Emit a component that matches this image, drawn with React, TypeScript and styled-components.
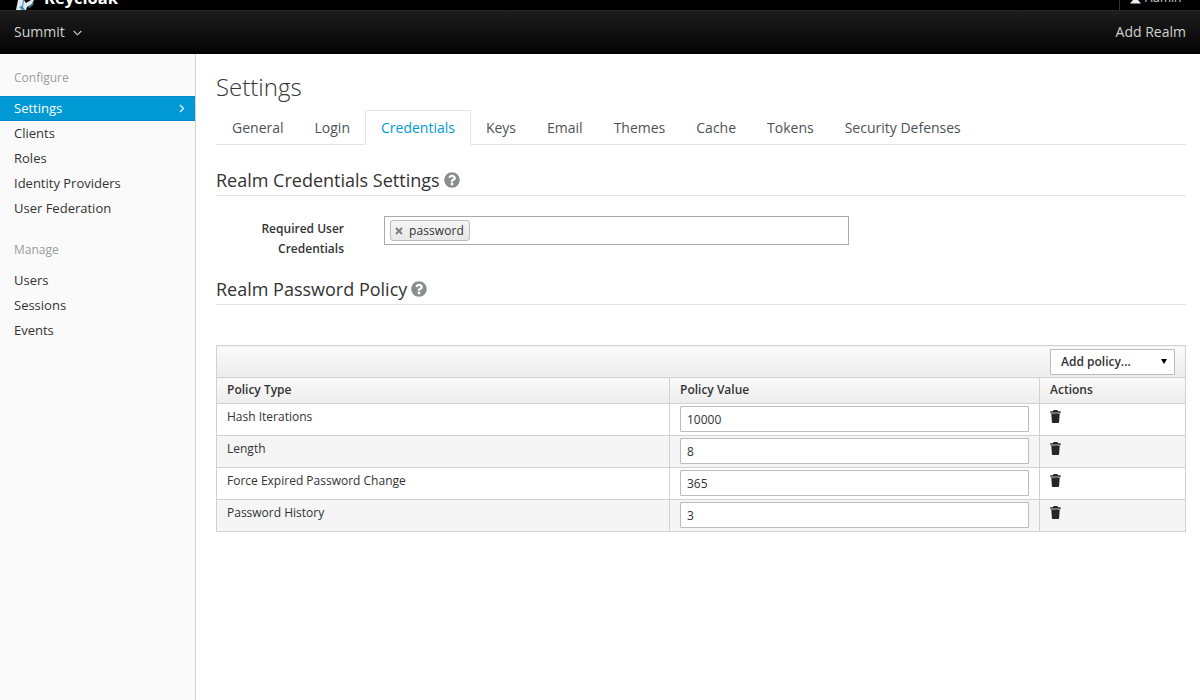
import React from 'react'
import styled, { createGlobalStyle } from 'styled-components'
import { FaQuestionCircle } from 'react-icons/fa'

const GlobalStyle = createGlobalStyle`
  html, body {
    margin: 0;
    padding: 0;
    height: 100%;
    background: #fff;
    overflow: hidden;
  }
  body {
    font-family: "Open Sans", "Liberation Sans", sans-serif;
    font-size: 12px;
    color: #333;
  }
  * {
    box-sizing: border-box;
  }
`

const Page = styled.div`
  width: 1200px;
  height: 700px;
  display: flex;
  flex-direction: column;
  overflow: hidden;
`

const UtilityBar = styled.div`
  height: 10px;
  flex: none;
  background: #000;
  display: flex;
  justify-content: space-between;
  overflow: hidden;
`

const Brand = styled.div`
  display: flex;
  align-items: flex-end;
  height: 10px;
  margin-left: 15px;
  gap: 8px;
`

const BrandName = styled.span`
  font-size: 16.5px;
  line-height: 17px;
  font-weight: 700;
  color: #fff;
  margin-bottom: 4px;
`

const UserMenu = styled.div`
  width: 81px;
  border-left: 1px solid #333;
  display: flex;
  align-items: flex-end;
  padding-left: 10px;
  gap: 4px;
  color: #d1d1d1;
  font-size: 12px;
  line-height: 12px;
`

const UserName = styled.span`
  margin-bottom: 6px;
`

const RealmBar = styled.div`
  height: 44px;
  flex: none;
  background: linear-gradient(to bottom, #1d1d1d, #030303);
  border-top: 1px solid #262626;
  display: flex;
  align-items: center;
  justify-content: space-between;
  padding: 0 14px 2px;
  color: #d1d1d1;
  font-size: 14px;
`

const RealmName = styled.div`
  display: flex;
  align-items: center;
  gap: 8px;
`

const Chevron = styled.svg`
  margin-top: 3px;
`

const Body = styled.div`
  flex: 1;
  display: flex;
  min-height: 0;
`

const Sidebar = styled.nav`
  width: 196px;
  flex: none;
  background: #fafafa;
  border-right: 1px solid #d1d1d1;
  padding-top: 14px;
`

const NavHeading = styled.div`
  height: 20px;
  padding-left: 14px;
  line-height: 20px;
  font-size: 12px;
  color: #9c9c9c;
  margin: 0 0 8px;

  & ~ & {
    margin-top: 19px;
    margin-bottom: 8px;
  }
`

const NavItem = styled.div<{ $active?: boolean }>`
  height: 25px;
  display: flex;
  align-items: center;
  justify-content: space-between;
  padding: 0 10px 1px 14px;
  font-size: 13px;
  color: ${p => (p.$active ? '#fff' : '#333')};
  background: ${p => (p.$active ? '#0099d3' : 'transparent')};
  border-top: ${p => (p.$active ? '1px solid #0085cf' : 'none')};
  border-bottom: ${p => (p.$active ? '1px solid #0085cf' : 'none')};
`

const Content = styled.main`
  flex: 1;
  padding: 0 14px 0 20px;
  min-width: 0;
`

const Title = styled.h1`
  margin: 0;
  height: 56px;
  padding-top: 15px;
  font-size: 24px;
  line-height: 36px;
  font-weight: 300;
  color: #333;
`

const Tabs = styled.div`
  display: flex;
  height: 35px;
  border-bottom: 1px solid #e5e5e5;
`

const Tab = styled.div<{ $active?: boolean }>`
  height: 35px;
  margin-right: -1px;
  padding: 0 15px;
  font-size: 14px;
  line-height: 33px;
  color: ${p => (p.$active ? '#0099d3' : '#4d5258')};
  background: ${p => (p.$active ? '#fff' : 'transparent')};
  border: 1px solid ${p => (p.$active ? '#e5e5e5' : 'transparent')};
  border-bottom-color: ${p => (p.$active ? '#fff' : 'transparent')};
`

const SectionTitle = styled.h2<{ $top: number }>`
  margin: ${p => p.$top}px 0 0;
  height: 36px;
  padding-top: 4px;
  display: flex;
  align-items: center;
  gap: 4px;
  font-size: 18px;
  line-height: 24px;
  font-weight: 400;
  color: #333;
  border-bottom: 1px solid #e5e5e5;
`

const HelpIcon = styled(FaQuestionCircle)`
  width: 16px;
  height: 16px;
  margin-top: 1px;
  flex: none;
  color: #8b8d8f;
`

const FormRow = styled.div`
  display: flex;
  margin-top: 20px;
  align-items: flex-start;
`

const FormLabel = styled.label`
  width: 128px;
  text-align: right;
  font-weight: 600;
  font-size: 12px;
  line-height: 20px;
  padding-top: 3px;
  color: #333;
  flex: none;
`

const TagInput = styled.div`
  width: 465px;
  height: 29px;
  margin-left: 40px;
  border: 1px solid #aaa;
  background: #fff;
  padding: 3px 5px;
  display: flex;
`

const Tag = styled.div`
  height: 21px;
  display: flex;
  align-items: center;
  gap: 6px;
  padding: 0 5px 0 4px;
  font-size: 12px;
  letter-spacing: 0.1px;
  color: #333;
  border: 1px solid #bbb;
  border-radius: 3px;
  background: linear-gradient(to bottom, #f4f4f4, #e8e8e8);
`

const PolicyTable = styled.table`
  width: 970px;
  margin-top: 40px;
  border-collapse: collapse;
  table-layout: fixed;
  border: 1px solid #d1d1d1;
`

const ToolbarCell = styled.td`
  height: 32px;
  padding: 0 10px 0 0;
  background: linear-gradient(to bottom, #fafafa, #ededed);
  border: 1px solid #d1d1d1;
  text-align: right;
  vertical-align: middle;
`

const PolicySelect = styled.div`
  width: 125px;
  height: 26px;
  display: inline-flex;
  align-items: center;
  justify-content: space-between;
  padding: 0 7px 0 10px;
  font-size: 12px;
  font-weight: 600;
  color: #333;
  background: #fff;
  border: 1px solid #bbb;
  border-radius: 1px;
  vertical-align: middle;
`

const Caret = styled.span`
  width: 0;
  height: 0;
  border-left: 3px solid transparent;
  border-right: 3px solid transparent;
  border-top: 5px solid #000;
`

const HeadCell = styled.th`
  height: 26px;
  padding: 0 10px 2px;
  text-align: left;
  font-size: 12px;
  font-weight: 600;
  color: #333;
  background: linear-gradient(to bottom, #fafafa, #ededed);
  border: 1px solid #d1d1d1;
`

const Row = styled.tr<{ $striped?: boolean }>`
  height: 32px;
  background: ${p => (p.$striped ? '#f5f5f5' : '#fff')};
`

const Cell = styled.td`
  padding: 4px 10px 0;
  height: 32px;
  vertical-align: top;
  font-size: 12px;
  line-height: 18px;
  color: #333;
  border: 1px solid #d1d1d1;
`

const ValueInput = styled.input`
  display: block;
  width: 349px;
  height: 26px;
  margin-top: -2px;
  padding: 2px 6px;
  font-family: inherit;
  font-size: 12px;
  color: #333;
  background: #fff;
  border: 1px solid #bbb;
  border-radius: 1px;
  outline: none;
`

const TrashIcon = styled.svg`
  display: block;
  width: 11px;
  height: 13px;
  margin-top: 2px;
`

const policies = [
  { name: 'Hash Iterations', value: '10000' },
  { name: 'Length', value: '8' },
  { name: 'Force Expired Password Change', value: '365' },
  { name: 'Password History', value: '3' },
]

const tabs = ['General', 'Login', 'Credentials', 'Keys', 'Email', 'Themes', 'Cache', 'Tokens', 'Security Defenses']

const Trash = () => (
  <TrashIcon viewBox="0 0 11 13">
    <path d="M3.6 0h3.8l.6 1.3h2.7v1.500H.3V1.300H3L3.600 0z" fill="#262626" />
    <rect x="0.3" y="2.4" width="10.4" height="1" fill="#77787a" />
    <path d="M1.300 3.400h8.400l-.6 8.500c0 .6-.4 1.100-1 1.100H2.900c-.6 0-1-.5-1-1.100L1.300 3.400z" fill="#262626" />
  </TrashIcon>
)

export default function App() {
  return (
    <Page>
      <GlobalStyle />
      <UtilityBar>
        <Brand>
          <svg width="21" height="10" viewBox="0 0 21 10">
            <path d="M1 10L3 0h6l2 3 5-3h3l-2 4-5 3-1 3H1z" fill="#dfe9ef" />
            <path d="M4 7l3-1 1-6h1L8 7l2 3H7z" fill="#3f8cb8" />
            <path d="M13 7l5-4 1 1-5 4z" fill="#3f8cb8" />
          </svg>
          <BrandName>Keycloak</BrandName>
        </Brand>
        <UserMenu>
          <svg width="11" height="10" viewBox="0 0 11 10">
            <path d="M3 0h5l3 3.500H0z" fill="#eee" />
          </svg>
          <UserName>Admin</UserName>
        </UserMenu>
      </UtilityBar>
      <RealmBar>
        <RealmName>
          Summit
          <Chevron width="9" height="6" viewBox="0 0 9 6">
            <path d="M.7 1l3.800 3.800L8.300 1" fill="none" stroke="#d1d1d1" strokeWidth="1.1" />
          </Chevron>
        </RealmName>
        <span>Add Realm</span>
      </RealmBar>
      <Body>
        <Sidebar>
          <NavHeading>Configure</NavHeading>
          <NavItem $active>
            Settings
            <svg width="6" height="9" viewBox="0 0 6 9">
              <path d="M1 1l3.500 3.500L1 8" fill="none" stroke="#fff" strokeWidth="1.2" />
            </svg>
          </NavItem>
          <NavItem>Clients</NavItem>
          <NavItem>Roles</NavItem>
          <NavItem>Identity Providers</NavItem>
          <NavItem>User Federation</NavItem>
          <NavHeading>Manage</NavHeading>
          <NavItem>Users</NavItem>
          <NavItem>Sessions</NavItem>
          <NavItem>Events</NavItem>
        </Sidebar>
        <Content>
          <Title>Settings</Title>
          <Tabs>
            {tabs.map(t => (
              <Tab key={t} $active={t === 'Credentials'}>
                {t}
              </Tab>
            ))}
          </Tabs>
          <SectionTitle $top={15}>
            Realm Credentials Settings
            <HelpIcon />
          </SectionTitle>
          <FormRow>
            <FormLabel>Required User Credentials</FormLabel>
            <TagInput>
              <Tag>
                <svg width="8" height="8" viewBox="0 0 8 8">
                  <path d="M1 1l6 6M7 1L1 7" stroke="#808080" strokeWidth="2" />
                </svg>
                password
              </Tag>
            </TagInput>
          </FormRow>
          <SectionTitle $top={10}>
            Realm Password Policy
            <HelpIcon />
          </SectionTitle>
          <PolicyTable>
            <colgroup>
              <col style={{ width: 453 }} />
              <col style={{ width: 370 }} />
              <col />
            </colgroup>
            <tbody>
              <tr>
                <ToolbarCell colSpan={3}>
                  <PolicySelect>
                    Add policy...
                    <Caret />
                  </PolicySelect>
                </ToolbarCell>
              </tr>
              <tr>
                <HeadCell>Policy Type</HeadCell>
                <HeadCell>Policy Value</HeadCell>
                <HeadCell>Actions</HeadCell>
              </tr>
              {policies.map((p, i) => (
                <Row key={p.name} $striped={i % 2 === 1}>
                  <Cell>{p.name}</Cell>
                  <Cell>
                    <ValueInput defaultValue={p.value} />
                  </Cell>
                  <Cell>
                    <Trash />
                  </Cell>
                </Row>
              ))}
            </tbody>
          </PolicyTable>
        </Content>
      </Body>
    </Page>
  )
}
